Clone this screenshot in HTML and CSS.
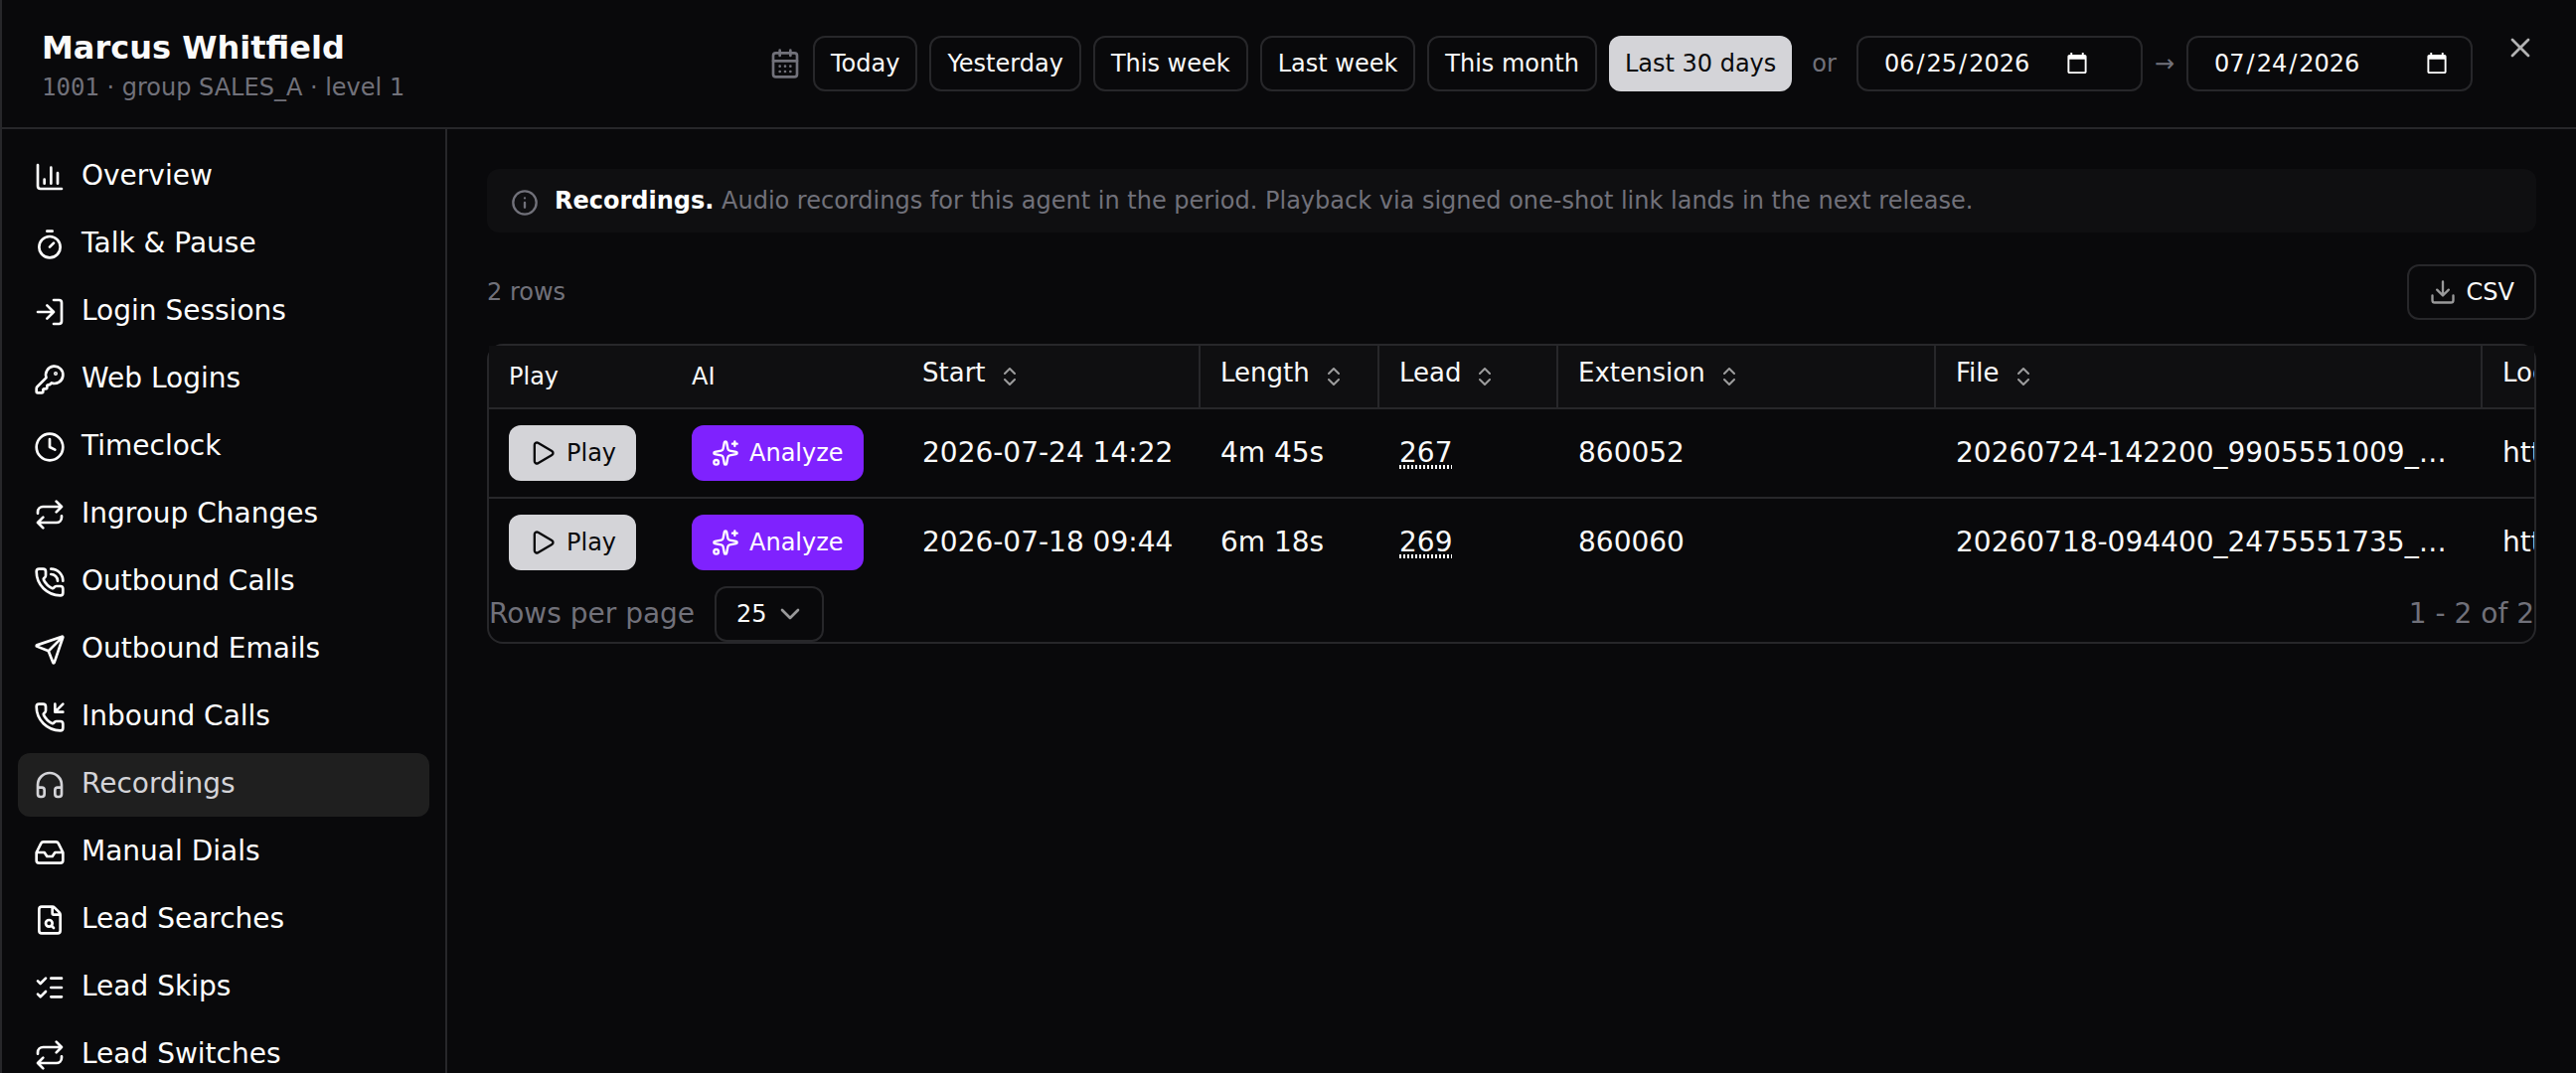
FILE: index.html
```html
<!DOCTYPE html>
<html lang="en">
<head>
<meta charset="utf-8">
<title>Marcus Whitfield – Recordings</title>
<link rel="stylesheet" href="styles.css">
</head>
<body>
<svg class="sprite" aria-hidden="true">
  <symbol id="chart" viewBox="0 0 24 24"><path d="M3 3v16a2 2 0 0 0 2 2h16M18 17V9M13 17V5M8 17v-3"/></symbol>
  <symbol id="timer" viewBox="0 0 24 24"><path d="M10 2h4M12 14l3-3"/><circle cx="12" cy="14" r="8"/></symbol>
  <symbol id="login" viewBox="0 0 24 24"><path d="m10 17 5-5-5-5M15 12H3M15 3h4a2 2 0 0 1 2 2v14a2 2 0 0 1-2 2h-4"/></symbol>
  <symbol id="key" viewBox="0 0 24 24"><path d="M2.586 17.414A2 2 0 0 0 2 18.828V21a1 1 0 0 0 1 1h3a1 1 0 0 0 1-1v-1a1 1 0 0 1 1-1h1a1 1 0 0 0 1-1v-1a1 1 0 0 1 1-1h.172a2 2 0 0 0 1.414-.586l.814-.814a6.5 6.5 0 1 0-4-4z"/><circle cx="16.5" cy="7.5" r=".5" fill="currentColor"/></symbol>
  <symbol id="clock" viewBox="0 0 24 24"><circle cx="12" cy="12" r="10"/><path d="M12 6v6l4 2"/></symbol>
  <symbol id="repeat" viewBox="0 0 24 24"><path d="m17 2 4 4-4 4M3 11v-1a4 4 0 0 1 4-4h14M7 22l-4-4 4-4M21 13v1a4 4 0 0 1-4 4H3"/></symbol>
  <symbol id="handset" viewBox="0 0 24 24"><path d="M13.832 16.568a1 1 0 0 0 1.213-.303l.355-.465A2 2 0 0 1 17 15h3a2 2 0 0 1 2 2v3a2 2 0 0 1-2 2A18 18 0 0 1 2 4a2 2 0 0 1 2-2h3a2 2 0 0 1 2 2v3a2 2 0 0 1-.8 1.6l-.468.351a1 1 0 0 0-.292 1.233 14 14 0 0 0 6.392 6.384"/></symbol>
  <symbol id="send" viewBox="0 0 24 24"><path d="M14.536 21.686a.5.5 0 0 0 .937-.024l6.5-19a.496.496 0 0 0-.635-.635l-19 6.5a.5.5 0 0 0-.024.937l7.93 3.18a2 2 0 0 1 1.112 1.11zM21.854 2.147l-10.94 10.939"/></symbol>
  <symbol id="headphones" viewBox="0 0 24 24"><path d="M3 14h3a2 2 0 0 1 2 2v3a2 2 0 0 1-2 2H5a2 2 0 0 1-2-2v-7a9 9 0 0 1 18 0v7a2 2 0 0 1-2 2h-1a2 2 0 0 1-2-2v-3a2 2 0 0 1 2-2h3"/></symbol>
  <symbol id="inbox" viewBox="0 0 24 24"><path d="M22 12h-6l-2 3h-4l-2-3H2M5.45 5.11 2 12v6a2 2 0 0 0 2 2h16a2 2 0 0 0 2-2v-6l-3.45-6.89A2 2 0 0 0 16.76 4H7.24a2 2 0 0 0-1.79 1.11z"/></symbol>
  <symbol id="filesearch" viewBox="0 0 24 24"><path d="M6 22a2 2 0 0 1-2-2V4a2 2 0 0 1 2-2h8a2.4 2.4 0 0 1 1.704.706l3.588 3.588A2.4 2.4 0 0 1 20 8v12a2 2 0 0 1-2 2zM14 2v5a1 1 0 0 0 1 1h5M13.3 16.3 15 18"/><circle cx="11.5" cy="14.5" r="2.5"/></symbol>
  <symbol id="checks" viewBox="0 0 24 24"><path d="M13 5h8M13 12h8M13 19h8M3 17l2 2 4-4M3 7l2 2 4-4"/></symbol>
  <symbol id="calendar" viewBox="0 0 24 24"><path d="M8 2v4M16 2v4M3 10h18M8 14h.01M12 14h.01M16 14h.01M8 18h.01M12 18h.01M16 18h.01"/><rect width="18" height="18" x="3" y="4" rx="2"/></symbol>
  <symbol id="close" viewBox="0 0 24 24"><path d="M18 6 6 18M6 6l12 12"/></symbol>
  <symbol id="info" viewBox="0 0 24 24"><circle cx="12" cy="12" r="10"/><path d="M12 16v-4M12 8h.01"/></symbol>
  <symbol id="download" viewBox="0 0 24 24"><path d="M12 15V3M21 15v4a2 2 0 0 1-2 2H5a2 2 0 0 1-2-2v-4M7 10l5 5 5-5"/></symbol>
  <symbol id="sort" viewBox="0 0 24 24"><path d="m7 15 5 5 5-5M7 9l5-5 5 5"/></symbol>
  <symbol id="play" viewBox="0 0 24 24"><path d="M5 5a2 2 0 0 1 3.008-1.728l11.997 6.998a2 2 0 0 1 .003 3.458l-12 7A2 2 0 0 1 5 19z"/></symbol>
  <symbol id="sparkles" viewBox="0 0 24 24"><path d="M11.017 2.814a1 1 0 0 1 1.966 0l1.051 5.558a2 2 0 0 0 1.594 1.594l5.558 1.051a1 1 0 0 1 0 1.966l-5.558 1.051a2 2 0 0 0-1.594 1.594l-1.051 5.558a1 1 0 0 1-1.966 0l-1.051-5.558a2 2 0 0 0-1.594-1.594l-5.558-1.051a1 1 0 0 1 0-1.966l5.558-1.051a2 2 0 0 0 1.594-1.594zM20 2v4M22 4h-4"/><circle cx="4" cy="20" r="2"/></symbol>
  <symbol id="chevron" viewBox="0 0 24 24"><path d="m6 9 6 6 6-6"/></symbol>
</svg>

<div class="panel">
  <header class="header">
    <div class="identity">
      <h1 class="name">Marcus Whitfield</h1>
      <p class="meta"><span class="mono">1001</span> · group SALES_A · level 1</p>
    </div>
    <div class="period">
      <svg class="icon muted"><use href="#calendar"/></svg>
      <button class="btn" type="button">Today</button>
      <button class="btn" type="button">Yesterday</button>
      <button class="btn" type="button">This week</button>
      <button class="btn" type="button">Last week</button>
      <button class="btn" type="button">This month</button>
      <button class="btn btn-primary" type="button" aria-pressed="true">Last 30 days</button>
      <span class="or">or</span>
      <input class="date date-from" type="date" value="2026-06-25" aria-label="From date">
      <span class="arrow">→</span>
      <input class="date" type="date" value="2026-07-24" aria-label="To date">
    </div>
    <button class="close" type="button" aria-label="Close"><svg class="icon"><use href="#close"/></svg></button>
  </header>

  <div class="body">
    <nav class="sidebar" aria-label="Agent sections">
      <a class="nav-item" href="#overview"><svg class="icon"><use href="#chart"/></svg><span>Overview</span></a>
      <a class="nav-item" href="#talk"><svg class="icon"><use href="#timer"/></svg><span>Talk &amp; Pause</span></a>
      <a class="nav-item" href="#sessions"><svg class="icon"><use href="#login"/></svg><span>Login Sessions</span></a>
      <a class="nav-item" href="#logins"><svg class="icon"><use href="#key"/></svg><span>Web Logins</span></a>
      <a class="nav-item" href="#timeclock"><svg class="icon"><use href="#clock"/></svg><span>Timeclock</span></a>
      <a class="nav-item" href="#ingroup"><svg class="icon"><use href="#repeat"/></svg><span>Ingroup Changes</span></a>
      <a class="nav-item" href="#outcalls"><svg class="icon" viewBox="0 0 24 24"><use href="#handset"/><path d="M13 2a9 9 0 0 1 9 9M13 6a5 5 0 0 1 5 5"/></svg><span>Outbound Calls</span></a>
      <a class="nav-item" href="#emails"><svg class="icon"><use href="#send"/></svg><span>Outbound Emails</span></a>
      <a class="nav-item" href="#incalls"><svg class="icon" viewBox="0 0 24 24"><use href="#handset"/><path d="M16 2v6h6M22 2l-6 6"/></svg><span>Inbound Calls</span></a>
      <a class="nav-item active" href="#recordings" aria-current="page"><svg class="icon"><use href="#headphones"/></svg><span>Recordings</span></a>
      <a class="nav-item" href="#dials"><svg class="icon"><use href="#inbox"/></svg><span>Manual Dials</span></a>
      <a class="nav-item" href="#searches"><svg class="icon"><use href="#filesearch"/></svg><span>Lead Searches</span></a>
      <a class="nav-item" href="#skips"><svg class="icon"><use href="#checks"/></svg><span>Lead Skips</span></a>
      <a class="nav-item" href="#switches"><svg class="icon"><use href="#repeat"/></svg><span>Lead Switches</span></a>
    </nav>

    <main class="content">
      <div class="notice">
        <svg class="icon icon-sm"><use href="#info"/></svg>
        <p class="notice-text"><strong>Recordings.</strong> Audio recordings for this agent in the period. Playback via signed one-shot link lands in the next release.</p>
      </div>

      <div class="toolbar">
        <span class="count">2 rows</span>
        <button class="btn btn-icon" type="button"><svg class="icon icon-sm dim"><use href="#download"/></svg>CSV</button>
      </div>

      <div class="card">
        <div class="scroller">
          <table class="table">
            <colgroup><col class="c-play"><col class="c-ai"><col class="c-start"><col class="c-short"><col class="c-short"><col class="c-ext"><col class="c-file"><col class="c-loc"></colgroup>
            <thead>
              <tr>
                <th class="plain" scope="col">Play</th>
                <th class="plain" scope="col">AI</th>
                <th scope="col"><span class="sort"><span class="sort-label">Start</span><svg class="icon icon-xs"><use href="#sort"/></svg></span></th>
                <th scope="col"><span class="sort"><span class="sort-label">Length</span><svg class="icon icon-xs"><use href="#sort"/></svg></span></th>
                <th scope="col"><span class="sort"><span class="sort-label">Lead</span><svg class="icon icon-xs"><use href="#sort"/></svg></span></th>
                <th scope="col"><span class="sort"><span class="sort-label">Extension</span><svg class="icon icon-xs"><use href="#sort"/></svg></span></th>
                <th scope="col"><span class="sort"><span class="sort-label">File</span><svg class="icon icon-xs"><use href="#sort"/></svg></span></th>
                <th scope="col"><span class="sort"><span class="sort-label">Location</span><svg class="icon icon-xs"><use href="#sort"/></svg></span></th>
              </tr>
            </thead>
            <tbody>
              <tr>
                <td><button class="btn btn-icon btn-primary" type="button"><svg class="icon icon-sm"><use href="#play"/></svg>Play</button></td>
                <td><button class="btn btn-icon btn-violet" type="button"><svg class="icon icon-sm"><use href="#sparkles"/></svg>Analyze</button></td>
                <td>2026-07-24 14:22</td>
                <td>4m 45s</td>
                <td><a class="lead" href="#lead-267">267</a></td>
                <td>860052</td>
                <td>20260724-142200_9905551009_860052</td>
                <td>https://recordings</td>
              </tr>
              <tr>
                <td><button class="btn btn-icon btn-primary" type="button"><svg class="icon icon-sm"><use href="#play"/></svg>Play</button></td>
                <td><button class="btn btn-icon btn-violet" type="button"><svg class="icon icon-sm"><use href="#sparkles"/></svg>Analyze</button></td>
                <td>2026-07-18 09:44</td>
                <td>6m 18s</td>
                <td><a class="lead" href="#lead-269">269</a></td>
                <td>860060</td>
                <td>20260718-094400_2475551735_860060</td>
                <td>https://recordings</td>
              </tr>
            </tbody>
          </table>
        </div>
        <div class="pager">
          <label for="page-size">Rows per page</label>
          <span class="select-wrap">
            <select class="select" id="page-size"><option>25</option></select>
            <svg class="icon select-icon"><use href="#chevron"/></svg>
          </span>
          <span class="range">1 - 2 of 2</span>
        </div>
      </div>
    </main>
  </div>
</div>
</body>
</html>
```
FILE: styles.css
```css
* {
  box-sizing: border-box;
}

:root {
  color-scheme: dark;
  --bg: #09090b;
  --surface: #0f0f11;
  --border: #27272a;
  --text: #fafafa;
  --muted: #71717a;
  --primary: #d4d4d8;
}

body {
  margin: 0;
  height: 100vh;
  overflow: hidden;
  background: var(--bg);
  color: var(--text);
  font: 28px/40px "DejaVu Sans", sans-serif;
}

h1,
p {
  margin: 0;
}

button,
input,
select {
  font: inherit;
  color: inherit;
}

.sprite {
  display: none;
}

.icon {
  flex: none;
  width: 32px;
  height: 32px;
  fill: none;
  stroke: currentColor;
  stroke-width: 2;
  stroke-linecap: round;
  stroke-linejoin: round;
}

.icon-sm {
  width: 28px;
  height: 28px;
}

.icon-xs {
  width: 24px;
  height: 24px;
  opacity: 0.6;
}

.dim {
  opacity: 0.6;
}

.muted {
  color: var(--muted);
}

.panel {
  display: flex;
  flex-direction: column;
  height: 100%;
  border-left: 2px solid var(--border);
}

/* Header */

.header {
  position: relative;
  display: flex;
  align-items: center;
  justify-content: space-between;
  padding: 24px 104px 24px 40px;
  border-bottom: 2px solid var(--border);
}

.name {
  font-size: 32px;
  line-height: 48px;
  font-weight: 700;
}

.meta {
  color: var(--muted);
  font-size: 24px;
  line-height: 32px;
}

.mono {
  font-family: "DejaVu Sans Mono", monospace;
}

.period {
  display: flex;
  align-items: center;
  gap: 12px;
}

.btn {
  display: inline-flex;
  align-items: center;
  height: 56px;
  padding: 0 16px;
  border: 2px solid var(--border);
  border-radius: 12px;
  background: transparent;
  font-size: 24px;
  line-height: 32px;
  white-space: nowrap;
}

.btn-icon {
  gap: 10px;
  padding: 0 20px;
}

.btn-primary {
  border: 0;
  background: var(--primary);
  color: var(--bg);
}

.btn-violet {
  border: 0;
  background: #7f22fe;
  color: #fff;
}

.or,
.arrow {
  color: var(--muted);
  font-size: 24px;
}

.or {
  padding: 0 8px;
}

.date {
  width: 288px;
  height: 56px;
  padding: 0 20px 0 24px;
  border: 2px solid var(--border);
  border-radius: 12px;
  background: transparent;
  font-size: 24px;
}

.date-from {
  padding-right: 50px;
}

.date::-webkit-datetime-edit-month-field,
.date::-webkit-datetime-edit-day-field,
.date::-webkit-datetime-edit-year-field {
  padding: 0 2px;
}

.close {
  position: absolute;
  top: 32px;
  right: 40px;
  display: flex;
  padding: 0;
  border: 0;
  background: none;
  opacity: 0.7;
}

/* Sidebar */

.body {
  display: flex;
  flex: 1;
  min-height: 0;
}

.sidebar {
  display: flex;
  flex: none;
  flex-direction: column;
  gap: 4px;
  width: 448px;
  padding: 16px;
  overflow: hidden;
  border-right: 2px solid var(--border);
}

.nav-item {
  display: flex;
  flex: none;
  align-items: center;
  gap: 16px;
  height: 64px;
  padding: 0 16px;
  border-radius: 12px;
  color: #fff;
  text-decoration: none;
}

.nav-item span {
  padding-bottom: 2px;
}

.nav-item.active {
  background: #1f1f1f;
  color: var(--primary);
}

/* Content */

.content {
  flex: 1;
  min-width: 0;
  padding: 40px;
}

.notice {
  display: flex;
  align-items: flex-start;
  gap: 16px;
  padding: 16px 24px;
  border-radius: 12px;
  background: var(--surface);
  color: var(--muted);
  font-size: 24px;
  line-height: 32px;
}

.notice .icon {
  margin-top: 4px;
}

.notice strong {
  color: #fff;
}

.toolbar {
  display: flex;
  align-items: center;
  justify-content: space-between;
  margin: 32px 0 24px;
}

.count {
  color: var(--muted);
  font-size: 24px;
  line-height: 32px;
}

.card {
  border: 2px solid var(--border);
  border-radius: 16px;
}

.scroller {
  overflow: hidden;
}

.table {
  width: 100%;
  min-width: 2200px;
  table-layout: fixed;
  border-collapse: separate;
  border-spacing: 0;
}

.c-play { width: 184px; }
.c-ai { width: 232px; }
.c-start { width: 300px; }
.c-short { width: 180px; }
.c-ext { width: 380px; }
.c-file { width: 550px; }

.table th,
.table td {
  padding: 0 20px;
  overflow: hidden;
  text-align: left;
  text-overflow: ellipsis;
  white-space: nowrap;
}

.table th {
  height: 64px;
  border-right: 2px solid var(--border);
  border-bottom: 2px solid var(--border);
  background: var(--surface);
  font-size: 26px;
  font-weight: 400;
}

.table th.plain,
.table th:nth-child(2) {
  border-right: 0;
  font-size: 24px;
}

.table td {
  height: 88px;
}

.table tbody tr:first-child td {
  height: 90px;
  border-bottom: 2px solid var(--border);
}

.table .btn {
  vertical-align: middle;
}

.sort {
  display: flex;
  align-items: center;
  gap: 12px;
}

.sort-label {
  padding-bottom: 8px;
}

/* Fine vertical dots under the lead number */
.lead {
  background: repeating-linear-gradient(90deg, var(--text) 0 2px, transparent 2px 4px) 0 100% / 100% 4px no-repeat;
  color: inherit;
  text-decoration: none;
}

.pager {
  display: flex;
  align-items: center;
  color: var(--muted);
}

.select-wrap {
  position: relative;
  margin-left: 20px;
}

.select {
  display: block;
  width: 110px;
  height: 56px;
  padding: 0 20px;
  border: 2px solid var(--border);
  border-radius: 12px;
  appearance: none;
  background: transparent;
  color: var(--text);
  font-size: 24px;
}

.select-icon {
  position: absolute;
  top: 12px;
  right: 18px;
  color: var(--text);
  opacity: 0.6;
  pointer-events: none;
}

.range {
  margin-left: auto;
}
```
